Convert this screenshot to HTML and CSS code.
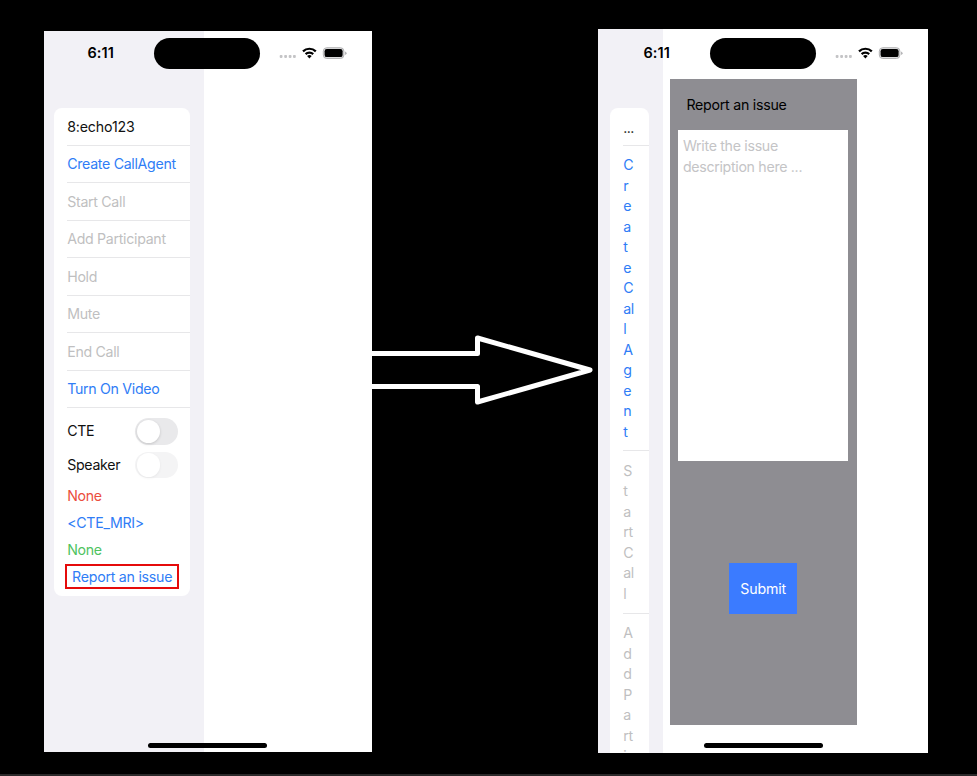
FILE: index.html
```
<!DOCTYPE html>
<html lang="en">
<head>
<meta charset="utf-8">
<title>Report an issue</title>
<link rel="stylesheet" href="styles.css">
</head>
<body>
<svg width="0" height="0" class="defs">
  <symbol id="signals" viewBox="0 0 68 16">
    <g fill="#c4c4c6"><rect x=".7" y="10.1" width="2.8" height="2.8" rx=".8"/><rect x="5.2" y="10.1" width="2.8" height="2.8" rx=".8"/><rect x="9.7" y="10.1" width="2.8" height="2.8" rx=".8"/><rect x="14" y="10.1" width="2.8" height="2.8" rx=".8"/></g>
    <g fill="none" stroke="#000" stroke-width="2.2"><path d="M24 6.4a9.1 9.1 0 0 1 12.8 0"/><path d="M26.6 9.1a5.4 5.4 0 0 1 7.6 0"/></g>
    <path d="M30.4 13.6l-2.3-2.5a3.2 3.2 0 0 1 4.6 0z"/>
    <rect x="44.3" y="2.7" width="20.6" height="10.8" rx="3.5" fill="#dcdcdd" stroke="#b4b4b6" stroke-width="1"/>
    <rect x="45.6" y="4.1" width="18" height="8" rx="2.2"/>
    <path d="M66.2 6.5q1.3.5 1.3 1.7t-1.3 1.7z" fill="#a5a5a8"/>
  </symbol>
</svg>
<main class="stage">
  <section class="phone phone-list">
    <header class="status"><span class="time">6:11</span><span class="island"></span><svg class="signals"><use href="#signals"/></svg></header>
    <aside class="sidebar">
      <div class="card">
        <div class="row name">8:echo123</div>
        <div class="row link">Create CallAgent</div>
        <div class="row off">Start Call</div>
        <div class="row off">Add Participant</div>
        <div class="row off">Hold</div>
        <div class="row off">Mute</div>
        <div class="row off">End Call</div>
        <div class="row link">Turn On Video</div>
        <div class="toggle-row"><span>CTE</span><span class="toggle"></span></div>
        <div class="toggle-row second"><span>Speaker</span><span class="toggle dim"></span></div>
        <div class="info red">None</div>
        <div class="info link">&lt;CTE_MRI&gt;</div>
        <div class="info green">None</div>
        <div class="report link">Report an issue</div>
      </div>
    </aside>
    <span class="home"></span>
  </section>
  <svg class="arrow" viewBox="0 0 226 80"><path d="M0 23.5H105.5V8L218 40L105.5 72V56.5H0"/></svg>
  <section class="phone phone-report">
    <header class="status"><span class="time">6:11</span><span class="island"></span><svg class="signals"><use href="#signals"/></svg></header>
    <aside class="sidebar">
      <div class="card">
        <div class="row dots">...</div>
        <div class="row tall link">C<br>r<br>e<br>a<br>t<br>e<br>C<br>al<br>l<br>A<br>g<br>e<br>n<br>t</div>
        <div class="row tall off">S<br>t<br>a<br>rt<br>C<br>al<br>l</div>
        <div class="row tall off">A<br>d<br>d<br>P<br>a<br>rt<br>i</div>
      </div>
    </aside>
    <div class="dialog">
      <div class="dialog-title">Report an issue</div>
      <div class="field">Write the issue<br>description here ...</div>
      <div class="submit">Submit</div>
    </div>
    <span class="home"></span>
  </section>
</main>
</body>
</html>
```
FILE: styles.css
```
* { box-sizing: border-box; }
body {
  margin: 0;
  height: 776px;
  overflow: hidden;
  background: #000;
  border-bottom: 2px solid #2b292a;
  font: 14.2px/20.5px Inter, "Liberation Sans", sans-serif;
  letter-spacing: -0.31px;
  color: #111;
}
.defs { display: block; }
.stage { display: flex; align-items: flex-start; padding-left: 44px; }
.phone { position: relative; display: flex; background: #fff; overflow: hidden; flex: none; }
.phone-list { width: 328px; height: 721px; margin-top: 31px; }
.phone-report { width: 330px; height: 724px; margin-top: 29px; }
.sidebar { background: #f2f1f6; flex: none; }
.phone-list .sidebar { width: 160px; padding: 77px 14px 0 9.5px; }
.phone-report .sidebar { width: 64.7px; padding: 79px 14px 0 11.5px; }

.status {
  position: absolute;
  inset: 6.5px 0 auto 43.5px;
  height: 31.5px;
  display: flex;
  align-items: center;
}
.phone-report .status { inset: 8.5px 0 auto 45.5px; }
.time { width: 66.5px; font-size: 14.5px; font-weight: 600; letter-spacing: 0.1px; color: #000; }
.island { width: 106px; height: 31.5px; border-radius: 16px; background: #000; }
.signals { width: 68px; height: 16px; margin-left: 18.5px; }
.home {
  position: absolute;
  left: 104px;
  bottom: 4.5px;
  width: 119px;
  height: 4.5px;
  border-radius: 3px;
  background: #000;
}
.phone-report .home { left: 106px; bottom: 5.5px; }

.card { background: #fff; border-radius: 8px; }
.phone-list .card { height: 487.5px; }
.row {
  height: 37.5px;
  margin-left: 13.7px;
  padding-top: 8.8px;
  border-bottom: 1px solid #e7e7e9;
  white-space: nowrap;
}
.row.name { letter-spacing: -0.16px; }
.row.dots { padding-top: 10px; letter-spacing: -0.5px; }
.row.tall { height: auto; padding: 9.6px 0 8.3px; }
.link { color: #2f7df6; }
.off { color: #bfbfc1; }
.red { color: #eb4e3d; }
.green { color: #4fc35f; }
.toggle-row {
  display: flex;
  align-items: center;
  justify-content: space-between;
  height: 26.5px;
  margin: 10px 12px 0 13.7px;
}
.toggle-row.second { margin-top: 7px; margin-bottom: 7px; }
.toggle { width: 43px; height: 26.5px; padding: 1.5px; border-radius: 14px; background: #e9e9eb; }
.toggle::before {
  content: "";
  display: block;
  width: 23.5px;
  height: 23.5px;
  border-radius: 50%;
  background: #fff;
  box-shadow: 0 1px 3px rgba(0, 0, 0, .16);
}
.toggle.dim { background: #f4f4f5; }
.toggle.dim::before { box-shadow: 0 1px 3px rgba(0, 0, 0, .06); }
.info { height: 27.2px; padding-top: 1px; margin-left: 13.7px; }
.report {
  width: 114px;
  height: 25px;
  margin: -2.6px 0 0 11.5px;
  padding-left: 5px;
  border: 2px solid #e50b0b;
  line-height: 21px;
  letter-spacing: -0.25px;
  white-space: nowrap;
}

.arrow { width: 226px; height: 80px; margin-top: 330px; flex: none; }
.arrow path { fill: none; stroke: #fff; stroke-width: 5; stroke-linejoin: round; }

.dialog {
  width: 187px;
  height: 646.5px;
  margin: 49.5px 0 0 7.2px;
  padding: 16px 9px 0 8.5px;
  background: #8e8d92;
}
.dialog-title { height: 35px; padding-left: 8px; color: #000; letter-spacing: -0.25px; }
.field { height: 331.5px; padding: 6.5px 4.5px; background: #fff; color: #c4c4c6; white-space: nowrap; }
.submit {
  width: 68.5px;
  height: 51.5px;
  margin: 101.5px auto 0;
  background: #3b7bff;
  color: #fff;
  line-height: 52px;
  letter-spacing: -0.15px;
  text-align: center;
}
```
